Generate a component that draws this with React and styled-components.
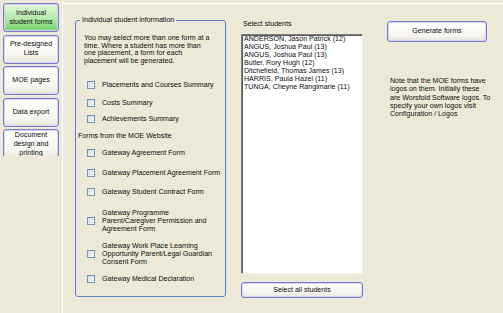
import styled, { createGlobalStyle } from "styled-components";

const GlobalStyle = createGlobalStyle`
  html, body {
    margin: 0;
    padding: 0;
    background: #ece9d8;
  }
`;

const Page = styled.div`
  width: 503px;
  height: 313px;
  display: flex;
  overflow: hidden;
  background: #ece9d8;
  font-family: "Liberation Sans", Arial, sans-serif;
  font-size: 7.1px;
  color: #0d0d0d;
`;

const Nav = styled.nav`
  flex: none;
  width: 62px;
  height: 156px;
  box-sizing: border-box;
  padding: 3px 0 0 3px;
  display: flex;
  flex-direction: column;
  gap: 2.5px;
  overflow: hidden;
`;

const XpButton = styled.button`
  box-sizing: border-box;
  margin: 0;
  padding: 0;
  font: inherit;
  color: inherit;
  line-height: 9px;
  text-align: center;
  display: flex;
  align-items: center;
  justify-content: center;
  border: 1px solid #7c7cc8;
  border-radius: 3px;
  box-shadow: inset 0 0 0 1px #d2d2f3;
  background: linear-gradient(#ffffff, #f6f5f0 70%, #e7e5dc);
`;

const NavButton = styled(XpButton)`
  flex: none;
  width: 56px;
  height: ${({ $tall }) => ($tall ? 31 : 29)}px;
  background: ${({ $active }) =>
    $active
      ? "linear-gradient(#e8f8df, #b3e9a8 55%, #72d56b)"
      : "linear-gradient(#ffffff, #f6f5f0 70%, #e7e5dc)"};
`;

const Panel = styled.main`
  flex: 1;
  margin-top: 3px;
  border-top: 1px solid #fff;
  border-left: 1px solid #fff;
  display: flex;
  align-items: flex-start;
  padding-left: 12px;
`;

const GroupBox = styled.fieldset`
  flex: none;
  margin: 12px 0 0;
  width: 151px;
  min-inline-size: auto;
  box-sizing: border-box;
  padding: 0 4px 13px 8px;
  border: 1px solid #5f80c2;
  border-radius: 3px;
`;

const Legend = styled.legend`
  margin-left: -4px;
  padding: 0 2px;
  line-height: 8px;
`;

const Intro = styled.p`
  margin: 11px 0 0;
  line-height: 7.7px;
  white-space: nowrap;
`;

const Option = styled.label`
  display: flex;
  align-items: center;
  gap: 7px;
  margin-top: ${({ $gap }) => $gap}px;
  padding-left: 3px;
  line-height: 8px;
  white-space: nowrap;
`;

const Check = styled.span`
  flex: none;
  width: 8px;
  height: 8px;
  box-sizing: border-box;
  border: 1px solid #7393b9;
  background: linear-gradient(135deg, #d6dbe2, #f8f8f5);
`;

const Section = styled.div`
  margin: 9px 0 0 -6px;
  line-height: 8px;
`;

const Column = styled.section`
  flex: none;
  width: ${({ $width }) => $width}px;
  margin-top: ${({ $top }) => $top}px;
  margin-left: ${({ $left }) => $left}px;
  display: flex;
  flex-direction: column;
`;

const Caption = styled.div`
  padding-left: 2px;
  line-height: 8px;
`;

const ListBox = styled.div`
  margin-top: 6px;
  height: 240px;
  box-sizing: border-box;
  padding: 1px 2px;
  background: #fff;
  border: 1px solid;
  border-color: #7f7f7f #f3f1e6 #f3f1e6 #7f7f7f;
  box-shadow: inset 1px 1px 0 #5a5a5a;
`;

const Student = styled.div`
  line-height: 7.95px;
  white-space: nowrap;
`;

const WideButton = styled(XpButton)`
  width: 100%;
  height: ${({ $height }) => $height}px;
  margin-top: ${({ $top }) => $top || 0}px;
`;

const Note = styled.p`
  margin: 35px 0 0;
  padding-left: 3px;
  line-height: 8.3px;
  white-space: nowrap;
`;

const navItems = [
  { label: ["Individual", "student forms"], active: true },
  { label: ["Pre-designed", "Lists"] },
  { label: ["MOE pages"] },
  { label: ["Data export"] },
  { label: ["Document", "design and", "printing"], tall: true },
];

const students = [
  "ANDERSON, Jason Patrick (12)",
  "ANGUS, Joshua Paul (13)",
  "ANGUS, Joshua Paul (13)",
  "Butler, Rory Hugh (12)",
  "Ditchefield, Thomas James (13)",
  "HARRIS, Paula Hazel (11)",
  "TUNGA, Cheyne Rangimarie (11)",
];

const Lines = ({ lines }) =>
  lines.map((line, i) => (
    <span key={i}>
      {i > 0 && <br />}
      {line}
    </span>
  ));

const App = () => (
  <Page>
    <GlobalStyle />
    <Nav>
      {navItems.map((item, i) => (
        <NavButton key={i} $active={item.active} $tall={item.tall}>
          <span>
            <Lines lines={item.label} />
          </span>
        </NavButton>
      ))}
    </Nav>

    <Panel>
      <GroupBox>
        <Legend>Individual student information</Legend>
        <Intro>
          <Lines
            lines={[
              "You may select more than one form at a",
              "time. Where a student has more than",
              "one placement, a form for each",
              "placement will be generated.",
            ]}
          />
        </Intro>
        <Option $gap={15}>
          <Check />
          Placements and Courses Summary
        </Option>
        <Option $gap={10}>
          <Check />
          Costs Summary
        </Option>
        <Option $gap={8}>
          <Check />
          Achievements Summary
        </Option>
        <Section>Forms from the MOE Website</Section>
        <Option $gap={9}>
          <Check />
          Gateway Agreement Form
        </Option>
        <Option $gap={12}>
          <Check />
          Gateway Placement Agreement Form
        </Option>
        <Option $gap={11}>
          <Check />
          Gateway Student Contract Form
        </Option>
        <Option $gap={13}>
          <Check />
          <span>
            <Lines
              lines={[
                "Gateway Programme",
                "Parent/Caregiver Permission and",
                "Agreement Form",
              ]}
            />
          </span>
        </Option>
        <Option $gap={9}>
          <Check />
          <span>
            <Lines
              lines={[
                "Gateway Work Place Learning",
                "Opportunity Parent/Legal Guardian",
                "Consent Form",
              ]}
            />
          </span>
        </Option>
        <Option $gap={9}>
          <Check />
          Gateway Medical Declaration
        </Option>
      </GroupBox>

      <Column $width={122} $top={16} $left={15}>
        <Caption>Select students</Caption>
        <ListBox>
          {students.map((s, i) => (
            <Student key={i}>{s}</Student>
          ))}
        </ListBox>
        <WideButton $height={16} $top={8}>
          Select all students
        </WideButton>
      </Column>

      <Column $width={100} $top={17} $left={24}>
        <WideButton $height={21}>Generate forms</WideButton>
        <Note>
          <Lines
            lines={[
              "Note that the MOE forms have",
              "logos on them. Initially these",
              "are Worsfold Software logos. To",
              "specify your own logos visit",
              "Configuration / Logos",
            ]}
          />
        </Note>
      </Column>
    </Panel>
  </Page>
);

export default App;
